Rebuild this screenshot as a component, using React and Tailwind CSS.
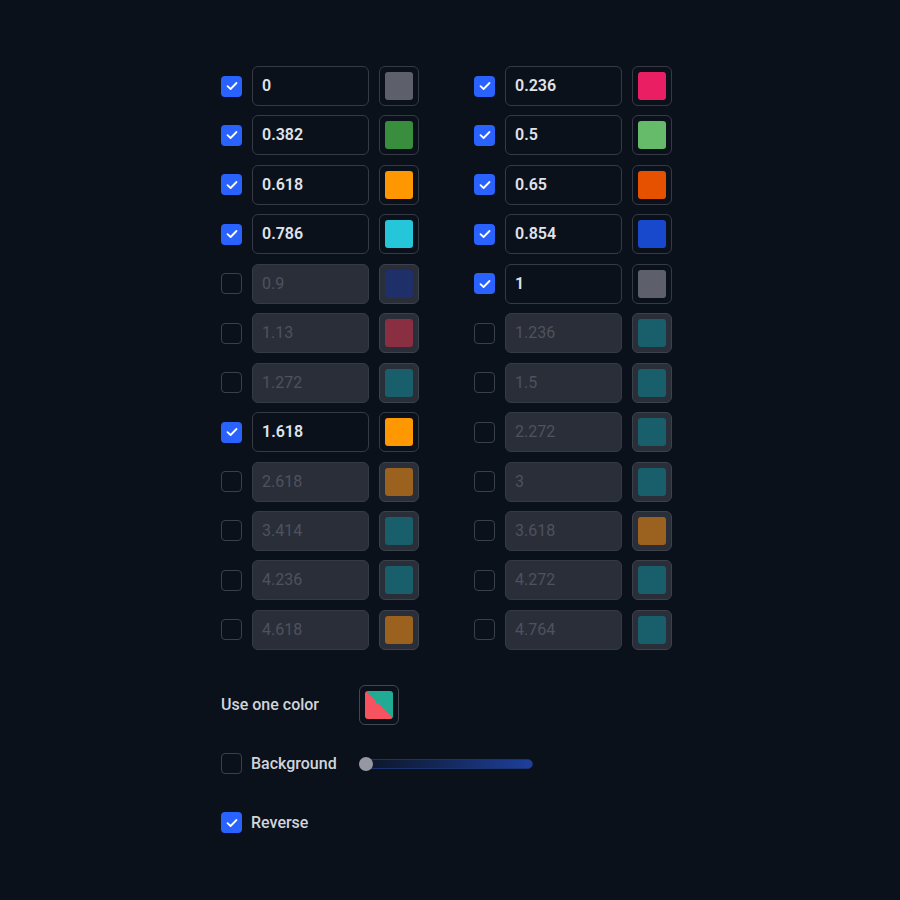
import React from "react";

const left = [
  { v: "0", on: true, c: "#5d606b" },
  { v: "0.382", on: true, c: "#388e3c" },
  { v: "0.618", on: true, c: "#ff9800" },
  { v: "0.786", on: true, c: "#26c6da" },
  { v: "0.9", on: false, c: "#1e2f6a" },
  { v: "1.13", on: false, c: "#8a2f41" },
  { v: "1.272", on: false, c: "#195f6b" },
  { v: "1.618", on: true, c: "#ff9800" },
  { v: "2.618", on: false, c: "#9a621e" },
  { v: "3.414", on: false, c: "#195f6b" },
  { v: "4.236", on: false, c: "#195f6b" },
  { v: "4.618", on: false, c: "#9a621e" },
];
const right = [
  { v: "0.236", on: true, c: "#e91e63" },
  { v: "0.5", on: true, c: "#66bb6a" },
  { v: "0.65", on: true, c: "#e65100" },
  { v: "0.854", on: true, c: "#1848cc" },
  { v: "1", on: true, c: "#5d606b" },
  { v: "1.236", on: false, c: "#195f6b" },
  { v: "1.5", on: false, c: "#195f6b" },
  { v: "2.272", on: false, c: "#195f6b" },
  { v: "3", on: false, c: "#195f6b" },
  { v: "3.618", on: false, c: "#9a621e" },
  { v: "4.272", on: false, c: "#195f6b" },
  { v: "4.764", on: false, c: "#195f6b" },
];

function Check({ on }) {
  return on ? (
    <div className="w-[21px] h-[21px] rounded-[4px] bg-[#2962ff] flex items-center justify-center shrink-0">
      <svg width="12" height="10" viewBox="0 0 12 10" fill="none">
        <path d="M1.5 5.2 L4.6 8 L10.5 2" stroke="#ffffff" strokeWidth="1.8" strokeLinecap="round" strokeLinejoin="round" />
      </svg>
    </div>
  ) : (
    <div className="w-[21px] h-[21px] rounded-[4px] border border-[#3b3f4a] bg-[#0b111a] shrink-0" />
  );
}

function Row({ v, on, c }) {
  return (
    <div className="flex items-center gap-[10px]">
      <Check on={on} />
      <div
        className={
          "w-[117px] h-[40px] rounded-[6px] border flex items-center pl-[9px] text-[16px] " +
          (on
            ? "border-[#363a45] bg-[#0b111a] text-[#e0e3eb] font-semibold"
            : "border-[#363a45] bg-[#2a2e39] text-[#4e525e]")
        }
      >
        {v}
      </div>
      <div
        className={
          "w-[40px] h-[40px] rounded-[6px] border flex items-center justify-center " +
          (on ? "border-[#363a45] bg-[#0b111a]" : "border-[#3d414c] bg-[#2a2e39]")
        }
      >
        <div className="w-[28px] h-[28px] rounded-[3px]" style={{ backgroundColor: c }} />
      </div>
    </div>
  );
}

export default function App() {
  return (
    <div
      className="min-h-screen w-full bg-[#0b111a] pt-[66px] pl-[221px]"
      style={{ fontFamily: "Roboto, 'Open Sans', sans-serif" }}
    >
      <div className="grid grid-cols-[198px_198px] gap-x-[55px]">
        <div className="flex flex-col gap-y-[9.45px]">
          {left.map((r) => (
            <Row key={r.v} {...r} />
          ))}
        </div>
        <div className="flex flex-col gap-y-[9.45px]">
          {right.map((r) => (
            <Row key={r.v} {...r} />
          ))}
        </div>
      </div>

      <div className="mt-[35px] flex flex-col gap-[19px]">
        <div className="flex items-center h-[40px]">
          <div className="w-[138px] text-[16px] font-medium text-[#d1d4dc]">Use one color</div>
          <div className="w-[40px] h-[40px] rounded-[6px] border border-[#434651] bg-[#0b111a] flex items-center justify-center">
            <div
              className="w-[28px] h-[28px] rounded-[3px]"
              style={{ background: "linear-gradient(45deg, #f7525f 50%, #22ab94 50%)" }}
            />
          </div>
        </div>
        <div className="flex items-center h-[40px]">
          <div className="w-[138px] flex items-center gap-[9px]">
            <Check on={false} />
            <span className="text-[16px] font-medium text-[#d1d4dc]">Background</span>
          </div>
          <div className="relative w-[174px] h-[14px] flex items-center">
            <div
              className="w-full h-[10px] rounded-full border border-[#1f3270]"
              style={{
                background:
                  "linear-gradient(90deg, rgba(33,72,180,0.08) 0%, rgba(33,72,180,0.35) 40%, rgba(33,72,180,0.85) 100%)",
              }}
            />
            <div className="absolute left-0 top-0 w-[14px] h-[14px] rounded-full bg-[#9598a1]" />
          </div>
        </div>
        <div className="flex items-center h-[40px]">
          <div className="flex items-center gap-[9px]">
            <Check on={true} />
            <span className="text-[16px] font-medium text-[#d1d4dc]">Reverse</span>
          </div>
        </div>
      </div>
    </div>
  );
}
